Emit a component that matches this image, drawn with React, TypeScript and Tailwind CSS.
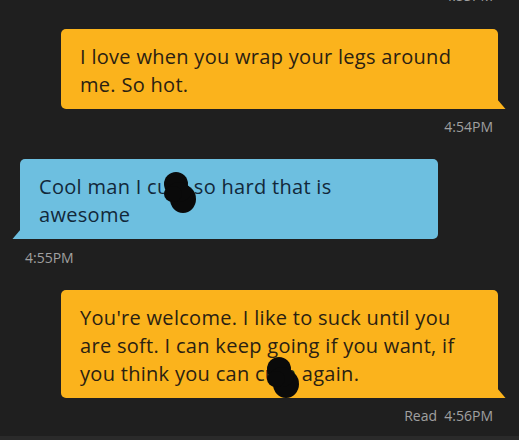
import React from 'react';

const font = { fontFamily: '"Open Sans", "Liberation Sans", sans-serif' };

const Mine = ({ children }: { children: React.ReactNode }) => (
  <div className="relative ml-[61px] mr-[21px] rounded-[5px] rounded-br-none bg-[#fbb31c] pl-[19px] pr-4 pt-[14px] pb-[10px] text-[20px] leading-[28px] tracking-[0.3px] text-[#2a2112]">
    {children}
    <svg className="absolute -right-[8px] bottom-0" width="9" height="10" viewBox="0 0 9 10">
      <path d="M0 0 L8.5 10 L0 10 Z" fill="#fbb31c" />
    </svg>
  </div>
);

const Theirs = ({ children }: { children: React.ReactNode }) => (
  <div className="relative ml-[20px] mr-[81px] rounded-[5px] rounded-bl-none bg-[#6dbfe0] pl-[19px] pr-4 pt-[14px] pb-[10px] text-[20px] leading-[28px] tracking-[0.3px] text-[#12283a]">
    {children}
    <svg className="absolute -left-[8px] bottom-0" width="9" height="10" viewBox="0 0 9 10">
      <path d="M9 0 L0.5 10 L9 10 Z" fill="#6dbfe0" />
    </svg>
  </div>
);

// marker scribble over the redacted word
const Blob = ({ className }: { className: string }) => (
  <svg className={`absolute ${className}`} width="32" height="42" viewBox="0 0 32 42">
    <ellipse cx="12" cy="12" rx="12" ry="12" fill="#0a0a0a" />
    <ellipse cx="19" cy="27" rx="13" ry="14" fill="#0a0a0a" />
    <ellipse cx="15" cy="20" rx="12" ry="10" fill="#0a0a0a" />
    <ellipse cx="9" cy="22" rx="9" ry="8" fill="#0a0a0a" />
  </svg>
);

export default function App() {
  return (
    <div className="flex h-[440px] w-[519px] flex-col overflow-hidden bg-[#1f1f1f]" style={font}>
      <div className="flex-1">
        <div className="-mt-[13px] pr-[26px] text-right text-[14px] leading-[18px] text-[#a0a0a0]">4:53PM</div>

        <div className="mt-[24px]">
          <Mine>
            I love when you wrap your legs around
            <br />
            me. So hot.
          </Mine>
        </div>
        <div className="mt-[9px] pr-[26px] text-right text-[14px] leading-[18px] text-[#a0a0a0]">4:54PM</div>

        <div className="mt-[23px]">
          <Theirs>
            Cool man I cum so hard that is
            <br />
            awesome
            <Blob className="left-[144px] top-[13px]" />
          </Theirs>
        </div>
        <div className="mt-[10px] pl-[25px] text-[14px] leading-[18px] text-[#a0a0a0]">4:55PM</div>

        <div className="mt-[23px]">
          <Mine>
            You're welcome. I like to suck until you
            <br />
            are soft. I can keep going if you want, if
            <br />
            you think you can cum again.
            <Blob className="left-[206px] top-[67px]" />
          </Mine>
        </div>
        <div className="mt-[9px] pr-[26px] text-right text-[14px] leading-[18px] text-[#a0a0a0]">
          Read&nbsp;&nbsp;4:56PM
        </div>
      </div>
      <div className="h-[4px] bg-[#2a2a2a]" />
    </div>
  );
}
